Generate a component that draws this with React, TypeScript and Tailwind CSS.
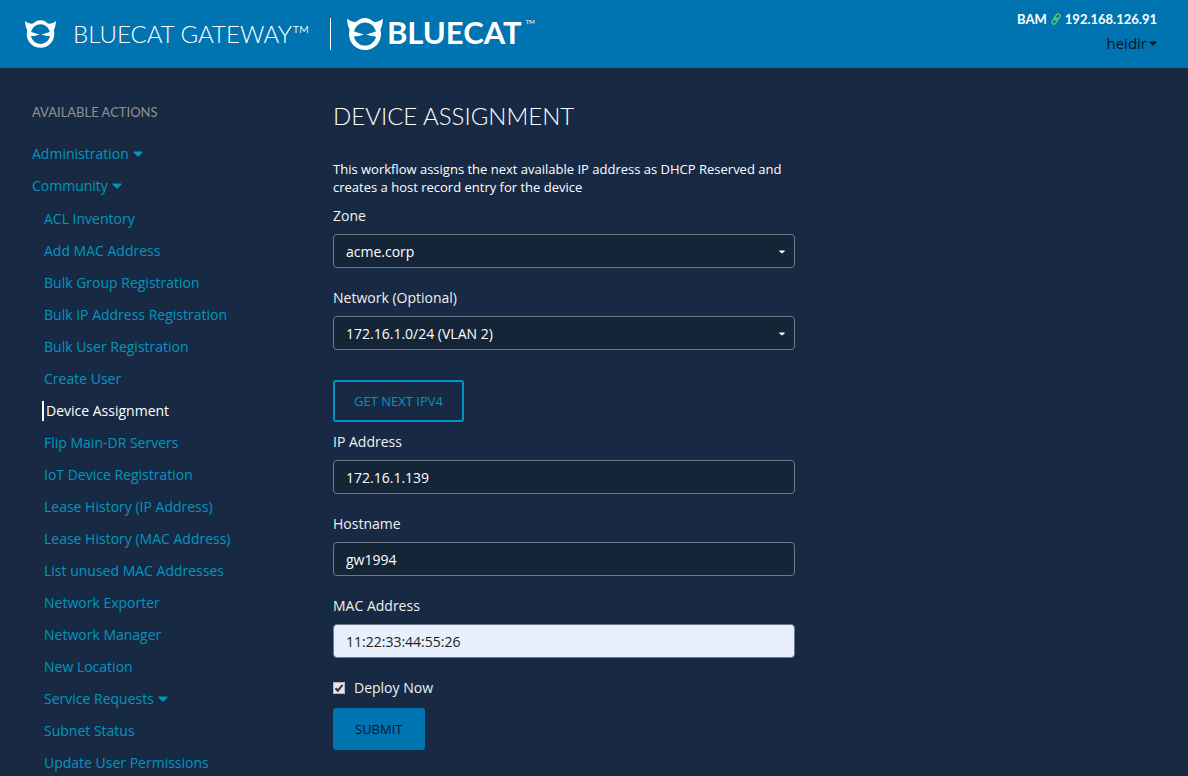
import React, { useState } from "react";

const heading = "font-['Lato',sans-serif]";

function CatMark({ className }: { className: string }) {
  return (
    <svg viewBox="0 0 36 32" className={className} fill="currentColor" aria-hidden="true">
      <path
        fillRule="evenodd"
        d="M0 .8 C3.2 3.2 6.4 4.4 9.4 3.8 C11.8 1.4 14.8 0 18 0 C21.2 0 24.2 1.4 26.6 3.8 C29.6 4.4 32.8 3.2 36 .8 C35.8 5 35 8.6 33.4 11.6 C33.8 13.1 34 14.5 34 16 C34 25 27 32 18 32 C9 32 2 25 2 16 C2 14.5 2.2 13.1 2.6 11.6 C1 8.6 .2 5 0 .8 Z M18 4.6 C12.6 4.6 8.4 8.4 7.1 13.6 L16.8 16.6 C13.5 17.9 10.2 18.4 7 18.4 C8.2 23.8 12.6 27.5 18 27.5 C23.4 27.5 27.8 23.8 29 18.4 C25.8 18.4 22.500 17.9 19.2 16.6 L28.9 13.6 C27.6 8.4 23.4 4.6 18 4.6 Z"
      />
    </svg>
  );
}

function Caret({ className }: { className: string }) {
  return (
    <svg viewBox="0 0 10 6" className={className} fill="currentColor" aria-hidden="true">
      <path d="M1 .5 H9 Q10 .8 9.3 1.7 L5.7 5.2 Q5 5.8 4.3 5.2 L.7 1.7 Q0 .8 1 .5 Z" />
    </svg>
  );
}

function LinkIcon() {
  return (
    <svg viewBox="0 0 10 12" className="h-3 w-2.5 text-[#5fd068]" fill="none" stroke="currentColor" strokeWidth="1.3" strokeLinecap="round" aria-hidden="true">
      <rect x="4.4" y="0.6" width="3.8" height="6.6" rx="1.9" transform="rotate(38 6.3 3.9)" />
      <rect x="1.8" y="4.8" width="3.8" height="6.6" rx="1.9" transform="rotate(38 3.7 8.1)" />
    </svg>
  );
}

const communityItems = [
  "ACL Inventory",
  "Add MAC Address",
  "Bulk Group Registration",
  "Bulk IP Address Registration",
  "Bulk User Registration",
  "Create User",
  "Device Assignment",
  "Flip Main-DR Servers",
  "IoT Device Registration",
  "Lease History (IP Address)",
  "Lease History (MAC Address)",
  "List unused MAC Addresses",
  "Network Exporter",
  "Network Manager",
  "New Location",
  "Service Requests",
  "Subnet Status",
  "Update User Permissions",
];

function Sidebar() {
  return (
    <aside className="w-[301px] shrink-0 pt-[34px]">
      <h2 className={`${heading} text-[13px] leading-5 text-[#8f9192]`}>AVAILABLE ACTIONS</h2>
      <nav className="mt-[22px] text-sm leading-5 text-[#0096c0]">
        <ul className="flex flex-col gap-3">
          <li>
            <a href="#administration" className="flex items-center gap-1">
              Administration <Caret className="h-1.5 w-2.5" />
            </a>
          </li>
          <li>
            <a href="#community" className="flex items-center gap-1">
              Community <Caret className="h-1.5 w-2.5" />
            </a>
            <ul className="mt-[13px] flex flex-col gap-3">
              {communityItems.map((item) =>
                item === "Device Assignment" ? (
                  <li key={item} className="ml-2.5">
                    <a href="#device-assignment" aria-current="page" className="block border-l-2 border-white pl-0.5 text-white">
                      {item}
                    </a>
                  </li>
                ) : (
                  <li key={item} className="ml-3">
                    <a href="#action" className="flex items-center gap-1">
                      {item}
                      {item === "Service Requests" && <Caret className="h-1.5 w-2.5" />}
                    </a>
                  </li>
                )
              )}
            </ul>
          </li>
        </ul>
      </nav>
    </aside>
  );
}

const labelClass = "text-sm leading-5 text-[#f0f0f0]";
const controlClass =
  "h-[34px] w-full appearance-none rounded-[4px] border border-[#6f7788] bg-[#152538] px-3 text-sm text-white";

function SelectField({ id, label, value }: { id: string; label: string; value: string }) {
  return (
    <div className="flex flex-col gap-2">
      <label htmlFor={id} className={labelClass}>{label}</label>
      <div className="relative">
        <select id={id} className={`${controlClass} pt-0.5`} defaultValue={value}>
          <option>{value}</option>
        </select>
        <Caret className="pointer-events-none absolute top-[16px] right-[10px] h-1 w-1.5 text-white" />
      </div>
    </div>
  );
}

function TextField({ id, label, value, filled }: { id: string; label: string; value: string; filled?: boolean }) {
  return (
    <div className="flex flex-col gap-2">
      <label htmlFor={id} className={labelClass}>{label}</label>
      <input
        id={id}
        type="text"
        defaultValue={value}
        className={
          filled
            ? "h-[34px] w-full rounded-[4px] border border-[#6f7788] bg-[#e8f0fe] px-3 text-sm text-[#1c1c1c]"
            : controlClass
        }
      />
    </div>
  );
}

export default function App() {
  const [deploy, setDeploy] = useState(true);
  return (
    <div className="min-h-screen bg-[#182a43] font-['Open_Sans',sans-serif]">
      <header className="flex h-[68px] items-center justify-between bg-[#0073b1] pr-[31px] pl-[25px] text-white">
        <div className="flex h-8 items-center">
          <CatMark className="h-7 w-[31px]" />
          <span className={`${heading} ml-[17px] text-2xl leading-8 font-light whitespace-nowrap`}>BLUECAT GATEWAY™</span>
          <span className="mr-4 ml-5 h-8 w-px bg-white" />
          <CatMark className="h-8 w-9" />
          <span className={`${heading} ml-1 pb-1 text-[31px] leading-8 font-bold`}>BLUECAT</span>
          <span className={`${heading} ml-1 self-start text-[6px] leading-2`}>TM</span>
        </div>
        <div className={`${heading} flex flex-col items-end pb-1.5`}>
          <div className="flex items-center gap-1 text-[13px] leading-6 font-bold">
            <span>BAM</span>
            <LinkIcon />
            <span>192.168.126.91</span>
          </div>
          <button type="button" className="flex items-center gap-0.5 font-['Open_Sans',sans-serif] text-[15px] leading-6 text-[#0b1522]">
            heidir <Caret className="h-[5px] w-2" />
          </button>
        </div>
      </header>

      <div className="flex px-8">
        <Sidebar />
        <main className="max-w-[462px] min-w-0 flex-1 pt-8">
          <h1 className={`${heading} text-2xl leading-8 font-light text-white`}>DEVICE ASSIGNMENT</h1>
          <form onSubmit={(event) => event.preventDefault()}>
            <p className="mt-7 text-[13px] leading-[18px] text-white">
              This workflow assigns the next available IP address as DHCP Reserved and creates a host record entry for the device
            </p>
            <div className="mt-2.5 flex flex-col gap-5">
              <SelectField id="zone" label="Zone" value="acme.corp" />
              <SelectField id="network" label="Network (Optional)" value="172.16.1.0/24 (VLAN 2)" />
            </div>
            <button type="button" className="mt-[30px] block h-[42px] rounded-[3px] border-2 border-[#0096c0] px-[19px] pt-0.5 text-[13px] text-[#0096c0]">
              GET NEXT IPV4
            </button>
            <div className="mt-2.5 flex flex-col gap-5">
              <TextField id="ip" label="IP Address" value="172.16.1.139" />
              <TextField id="hostname" label="Hostname" value="gw1994" />
              <TextField id="mac" label="MAC Address" value="11:22:33:44:55:26" filled />
              <label className="flex items-center gap-[9px] text-sm leading-5 text-[#f0f0f0]">
                <span className="relative flex h-3 w-3">
                  <input
                    type="checkbox"
                    checked={deploy}
                    onChange={(event) => setDeploy(event.target.checked)}
                    className="h-3 w-3 appearance-none border border-[#b5b5b5] bg-[#e6e6e6]"
                  />
                  {deploy && (
                    <svg viewBox="0 0 12 12" className="pointer-events-none absolute inset-0 h-3 w-3" fill="none" stroke="#333" strokeWidth="2" aria-hidden="true">
                      <path d="M2.5 6.2 L4.8 8.7 L9.5 2.8" />
                    </svg>
                  )}
                </span>
                Deploy Now
              </label>
            </div>
            <button type="submit" className="mt-2.5 block h-[42px] rounded-[3px] bg-[#0073b1] px-[22px] pt-0.5 text-[13px] font-medium text-[#0b1522]">
              SUBMIT
            </button>
          </form>
        </main>
      </div>
    </div>
  );
}
